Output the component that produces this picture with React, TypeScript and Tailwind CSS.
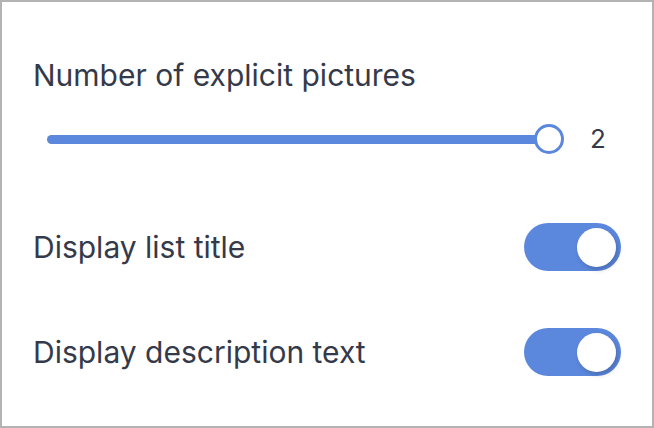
export default function App() {
  return (
    <div
      className="w-[654px] h-[428px] border-2 border-[#b3b3b3] bg-white px-[31px] pt-[55px] text-[#353a4a]"
      style={{ fontFamily: 'Inter, "Liberation Sans", Arial, sans-serif' }}
    >
      <div className="text-[30px] leading-[36px]">Number of explicit pictures</div>

      <div className="mt-[30px] h-[32px] flex items-center pl-[14px]">
        <div className="relative w-[502px] h-[9px] rounded-full bg-[#5b87dd]">
          <div className="absolute right-[-15px] top-1/2 -translate-y-1/2 w-[30px] h-[30px] rounded-full border-[3px] border-[#5b87dd] bg-white" />
        </div>
        <span className="ml-[41px] text-[26px] leading-[32px]">2</span>
      </div>

      <div className="mt-[68px] flex items-center justify-between h-[48px]">
        <span className="text-[30px] leading-[36px]">Display list title</span>
        <Toggle />
      </div>

      <div className="mt-[57px] flex items-center justify-between h-[48px]">
        <span className="text-[30px] leading-[36px]">Display description text</span>
        <Toggle />
      </div>
    </div>
  );
}

function Toggle() {
  return (
    <div className="w-[97px] h-[48px] rounded-full bg-[#5b87dd] flex items-center justify-end pr-[5px]">
      <div className="w-[39px] h-[39px] rounded-full bg-white shadow-[2px_3px_5px_rgba(0,0,0,0.18)]" />
    </div>
  );
}
